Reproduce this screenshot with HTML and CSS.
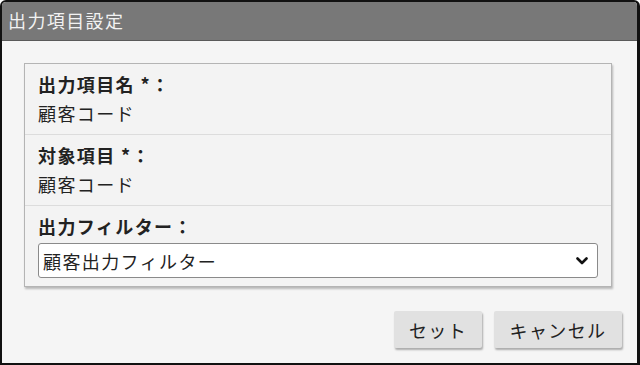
FILE: index.html
```html
<!DOCTYPE html>
<html>
<head>
  <meta charset="UTF-8">
  <title>出力項目設定</title>
  <link rel="stylesheet" href="styles.css">
</head>
<body>
  <div class="dialogo">
    <div class="titulo">出力項目設定</div>
    <div class="contenido">
      <div class="panel">
        <div class="fila">
          <div class="etiqueta">出力項目名 *：</div>
          <div class="valor">顧客コード</div>
        </div>
        <div class="fila">
          <div class="etiqueta">対象項目 *：</div>
          <div class="valor">顧客コード</div>
        </div>
        <div class="fila">
          <div class="etiqueta">出力フィルター：</div>
          <div class="selector">
            <select id="filtro">
              <option>顧客出力フィルター</option>
            </select>
            <!-- flecha del desplegable -->
            <svg class="flecha" width="12" height="8" viewBox="0 0 12 8">
              <path d="M1.5 1.5 L6 6 L10.5 1.5" fill="none" stroke="#111" stroke-width="2.6" stroke-linecap="round" stroke-linejoin="round"/>
            </svg>
          </div>
        </div>
      </div>
      <div class="botones">
        <button class="boton">セット</button>
        <button class="boton">キャンセル</button>
      </div>
    </div>
  </div>
</body>
</html>
```

FILE: styles.css
```css
:root {
  --title-bg: #787878;
  --fondo: #f5f5f5;
  --panel-bg: #f3f3f3;
  --texto: #222222;
  --linea: #dcdcdc;
}
html, body {
  margin: 0;
  padding: 0;
  background: #ffffff;
}
body {
  font-family: "Noto Sans CJK JP", "Noto Sans", sans-serif;
  color: var(--texto);
  font-size: 18px;
  letter-spacing: 1.4px;
}
.dialogo {
  width: 640px;
  height: 365px;
  box-sizing: border-box;
  border: 2px solid #111;
  border-right-width: 3px;
  border-radius: 6px 6px 0 0;
  background: var(--fondo);
  display: flex;
  flex-direction: column;
  overflow: hidden;
}
.titulo {
  height: 38px;
  line-height: 36px;
  background: var(--title-bg);
  color: #f2f2f2;
  padding-left: 6px;
  border-bottom: 1px solid #5a5a5a;
}
.contenido {
  padding: 22px 15px 0 22px;
  display: flex;
  flex-direction: column;
}
.panel {
  width: 588px;
  box-sizing: border-box;
  border: 1px solid #b4b4b4;
  background: var(--panel-bg);
  box-shadow: 1px 2px 2px rgba(0, 0, 0, 0.25);
}
.fila {
  padding: 6px 13px;
  border-bottom: 1px solid var(--linea);
}
.fila:last-child {
  border-bottom: none;
  padding-bottom: 8px;
}
.etiqueta {
  font-weight: bold;
  line-height: 29px;
}
.valor {
  line-height: 29px;
}
.selector {
  position: relative;
  margin-top: 2px;
}
select {
  width: 100%;
  height: 35px;
  appearance: none;
  -webkit-appearance: none;
  background: #ffffff;
  border: 1px solid #8a8a8a;
  border-radius: 3px;
  font-family: inherit;
  font-size: 18px;
  letter-spacing: 1.4px;
  color: var(--texto);
  padding: 0 4px;
  outline: none;
}
.flecha {
  position: absolute;
  right: 10px;
  top: 14px;
  pointer-events: none;
}
.botones {
  display: flex;
  justify-content: flex-end;
  gap: 12px;
  margin-top: 24px;
}
.boton {
  height: 37px;
  padding: 0 13px;
  border: none;
  border-radius: 2px;
  background: #e1e1e1;
  box-shadow: 1px 2px 2px rgba(0, 0, 0, 0.3);
  font-family: inherit;
  font-size: 18px;
  letter-spacing: 1.4px;
  color: var(--texto);
  cursor: pointer;
}
.boton:first-child {
  width: 88px;
}
.boton:last-child {
  width: 128px;
}
```
